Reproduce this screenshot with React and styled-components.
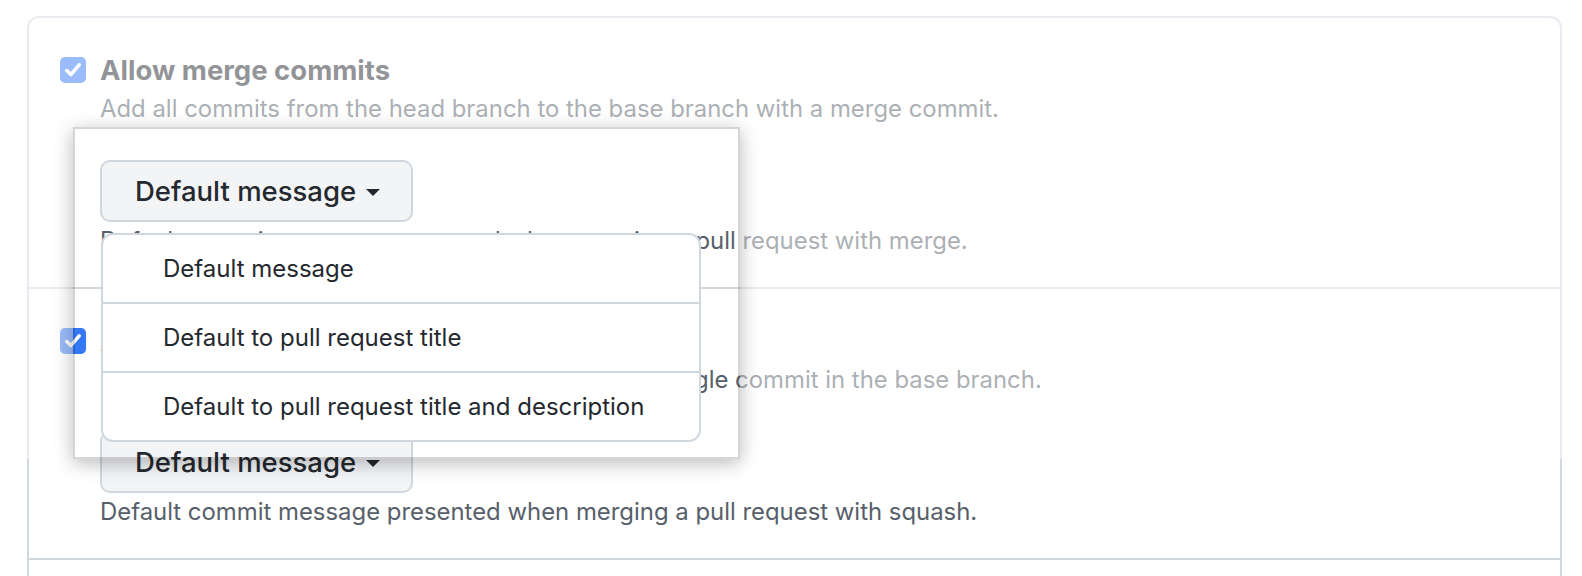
import React from "react";
import styled, { createGlobalStyle } from "styled-components";

const GlobalStyle = createGlobalStyle`
  html, body { margin: 0; padding: 0; background: #ffffff; }
  body {
    font-family: Inter, "Noto Sans", sans-serif;
    -webkit-font-smoothing: antialiased;
  }
  * { box-sizing: border-box; }
`;

const Page = styled.div`
  position: relative;
  width: 1582px;
  height: 576px;
  overflow: hidden;
  padding: 16px 20px 0 27px;
`;

const SettingsBox = styled.div`
  width: 1535px;
  border: 2px solid #d0d7de;
  border-bottom: none;
  border-radius: 12px 12px 0 0;
`;

const Section = styled.div`
  position: relative;
  padding: 36px 32px 28px 31px;
  border-top: ${(p) => (p.$first ? "none" : "2px solid #d0d7de")};
  min-height: ${(p) => (p.$empty ? "80px" : "0")};
`;

const OptionRow = styled.label`
  display: flex;
  align-items: center;
  gap: 14px;
  height: 32px;
`;

const CheckBox = styled.span`
  flex: none;
  width: 26px;
  height: 26px;
  border-radius: 5px;
  background: #3478f6;
  display: flex;
  align-items: center;
  justify-content: center;
`;

const Title = styled.span`
  font-size: 27.5px;
  line-height: 32px;
  font-weight: 700;
  color: #24292f;
`;

const Body = styled.div`
  padding-left: 40px;
`;

const Note = styled.p`
  margin: ${(p) => (p.$after ? "1px" : "5px")} 0 0;
  font-size: 23.9px;
  line-height: 36px;
  color: #57606a;
  white-space: nowrap;
`;

const SelectWrap = styled.div`
  position: relative;
  margin-top: 33px;
  width: max-content;
`;

const SelectButton = styled.button`
  display: flex;
  align-items: center;
  gap: 10px;
  height: 62px;
  padding: 0 31px 0 33px;
  border: 2px solid #d0d7de;
  border-radius: 10px;
  background: #f3f4f6;
  color: #24292f;
  font-family: inherit;
  font-size: 27.5px;
  font-weight: 500;
  cursor: pointer;
`;

const Caret = styled.span`
  width: 0;
  height: 0;
  border-left: 7px solid transparent;
  border-right: 7px solid transparent;
  border-top: 7px solid #24292f;
  margin-top: 2px;
`;

const Menu = styled.ul`
  position: absolute;
  top: calc(100% + 11px);
  left: 1px;
  width: 600px;
  margin: 0;
  padding: 0;
  list-style: none;
  background: #ffffff;
  border: 2px solid #d0d7de;
  border-radius: 12px;
  z-index: 3;
  overflow: hidden;
`;

const MenuItem = styled.li`
  display: flex;
  align-items: center;
  height: ${(p) => (p.$first ? "67px" : "69px")};
  padding-left: 60px;
  font-size: 24px;
  line-height: 36px;
  color: #24292f;
  border-top: ${(p) => (p.$first ? "none" : "2px solid #d0d7de")};
`;

const FadeLayer = styled.div`
  position: absolute;
  top: 0;
  left: 0;
  width: 100%;
  height: 459px;
  overflow: hidden;
  pointer-events: none;
  z-index: 5;
`;

const Hole = styled.div`
  position: absolute;
  left: 73px;
  top: 127px;
  width: 667px;
  height: 332px;
  box-shadow: 0 0 0 3000px rgba(255, 255, 255, 0.5);
`;

const Frame = styled.div`
  position: absolute;
  left: 73px;
  top: 127px;
  width: 667px;
  height: 332px;
  border: 2px solid rgba(0, 0, 0, 0.16);
  box-shadow: 0 4px 18px rgba(0, 0, 0, 0.28);
  pointer-events: none;
  z-index: 6;
`;

const Check = () => (
  <svg width="20" height="20" viewBox="0 0 20 20" aria-hidden="true">
    <path
      d="M3.8 10.6 L7.8 14.6 L16.2 4.8"
      fill="none"
      stroke="#ffffff"
      strokeWidth="3.6"
      strokeLinecap="round"
      strokeLinejoin="round"
    />
  </svg>
);

const Option = ({ title, note, selectNote, open }) => (
  <>
    <OptionRow>
      <CheckBox>
        <Check />
      </CheckBox>
      <Title>{title}</Title>
    </OptionRow>
    <Body>
      <Note>{note}</Note>
      <SelectWrap>
        <SelectButton type="button">
          Default message
          <Caret />
        </SelectButton>
        {open && (
          <Menu>
            <MenuItem $first>Default message</MenuItem>
            <MenuItem>Default to pull request title</MenuItem>
            <MenuItem>Default to pull request title and description</MenuItem>
          </Menu>
        )}
      </SelectWrap>
      <Note $after>{selectNote}</Note>
    </Body>
  </>
);

export default function App() {
  return (
    <>
      <GlobalStyle />
      <Page>
        <SettingsBox>
          <Section $first>
            <Option
              open
              title="Allow merge commits"
              note="Add all commits from the head branch to the base branch with a merge commit."
              selectNote="Default commit message presented when merging a pull request with merge."
            />
          </Section>
          <Section>
            <Option
              title="Allow squash merging"
              note="Combine all commits from the head branch into a single commit in the base branch."
              selectNote="Default commit message presented when merging a pull request with squash."
            />
          </Section>
          <Section $empty />
        </SettingsBox>
        <FadeLayer>
          <Hole />
        </FadeLayer>
        <Frame />
      </Page>
    </>
  );
}
